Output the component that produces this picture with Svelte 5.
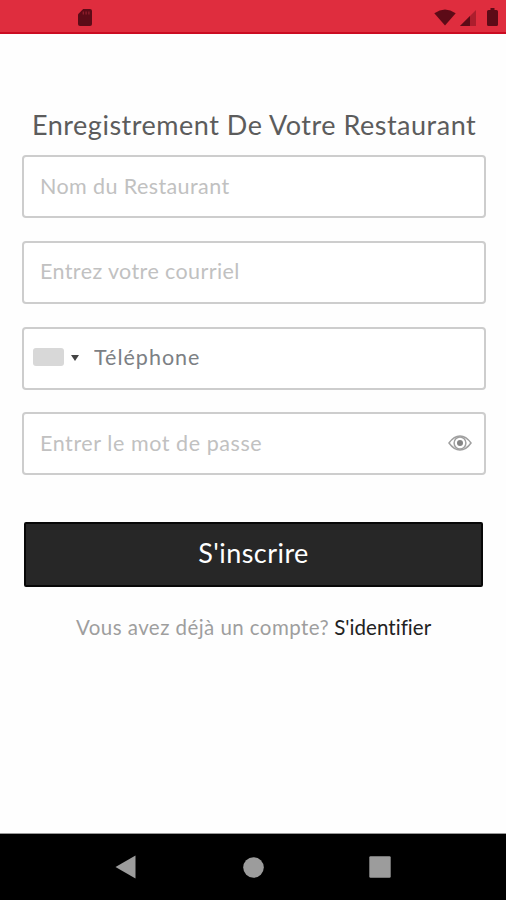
<script>
  let name = $state('');
  let email = $state('');
  let phone = $state('');
  let password = $state('');
  let visible = $state(false);
</script>

<div class="screen">
  <header class="status">
    <svg class="sd" width="16" height="20" viewBox="0 0 16 20" aria-hidden="true">
      <path d="M6.2 1H13a2 2 0 0 1 2 2v13a2 2 0 0 1-2 2H3a2 2 0 0 1-2-2V6.2z" fill="#5c0b17" />
      <path d="M6.3 3.5v3M9.1 3.5v3M11.9 3.5v3" stroke="#94202e" stroke-width="1.2" />
    </svg>
    <div class="signals">
      <svg class="wifi" width="22" height="17" viewBox="0 0 22 17" aria-hidden="true">
        <path d="M.3 4.200Q11-3.200 21.700 4.200L11 16.500z" fill="#5c0b17" />
      </svg>
      <svg class="cell" width="16" height="16" viewBox="0 0 16 16" aria-hidden="true">
        <path d="M16 0v16H0z" fill="#ad1e2d" />
        <path d="M10 6V16H0z" fill="#5c0b17" />
      </svg>
      <svg width="11" height="18" viewBox="0 0 11 18" aria-hidden="true">
        <path d="M3.500 0h4v2H9.500a1.500 1.500 0 0 1 1.500 1.500v13A1.500 1.500 0 0 1 9.500 18h-8A1.500 1.500 0 0 1 0 16.500v-13A1.500 1.500 0 0 1 1.500 2h2z" fill="#5c0b17" />
      </svg>
    </div>
  </header>

  <main>
    <h1>Enregistrement De Votre Restaurant</h1>
    <form onsubmit={(e) => e.preventDefault()}>
      <label class="field"><input class="name" placeholder="Nom du Restaurant" bind:value={name} /></label>
      <label class="field"><input class="email" placeholder="Entrez votre courriel" bind:value={email} /></label>
      <div class="field phone">
        <span class="flag"></span>
        <span class="caret"></span>
        <input class="tel" placeholder="Téléphone" bind:value={phone} />
      </div>
      <div class="field">
        <input class="pass" type={visible ? 'text' : 'password'} placeholder="Entrer le mot de passe" bind:value={password} />
        <button class="eye" type="button" aria-label="Afficher" onclick={() => (visible = !visible)}>
          <svg width="24" height="18" viewBox="0 0 24 18" fill="none" stroke="#a0a0a0" stroke-width="1.500">
            <path d="M1 9Q6 2 12 2T23 9Q18 16 12 16T1 9z" />
            <circle cx="12" cy="9" r="5.900" />
            <circle cx="12" cy="9" r="3" fill="#858585" stroke="none" />
          </svg>
        </button>
      </div>
      <button class="submit">S'inscrire</button>
    </form>
    <p class="login"><span class="ask">Vous avez déjà un compte?</span> <span class="link">S'identifier</span></p>
  </main>

  <nav>
    <svg width="21" height="24" viewBox="0 0 21 24" aria-hidden="true"><path d="M20.500.5v23L.5 12z" fill="#9c9c9c" /></svg>
    <svg class="home" width="21" height="21" viewBox="0 0 21 21" aria-hidden="true"><circle cx="10.500" cy="10.500" r="10.300" fill="#9c9c9c" /></svg>
    <svg width="22" height="22" viewBox="0 0 22 22" aria-hidden="true"><rect x=".3" y=".3" width="21.400" height="21.400" rx="1.200" fill="#9c9c9c" /></svg>
  </nav>
</div>

<style>
  :global(body) { background: #fff; }
  .screen {
    display: flex;
    flex-direction: column;
    width: 506px;
    height: 900px;
    overflow: hidden;
    background: #fefefe;
    font-family: Lato, "Liberation Sans", sans-serif;
  }
  .status {
    display: flex;
    justify-content: space-between;
    box-sizing: border-box;
    height: 34px;
    padding: 8px 8px 0 77px;
    background: #df2d3e;
    border-bottom: 2px solid #cb0c22;
  }
  .signals { display: flex; align-items: flex-start; }
  .wifi { margin-top: 1px; }
  .cell { margin: 2px 11px 0 4px; }
  main { flex: 1; padding: 72px 20px 0 22px; }
  h1 {
    margin: 0 0 11px;
    height: 38px;
    padding-left: 10px;
    font-size: 27px;
    line-height: 38px;
    font-weight: 400;
    letter-spacing: 0.51px;
    white-space: nowrap;
    color: #5c5c5c;
  }
  form { display: flex; flex-direction: column; gap: 22.800px; }
  .field {
    display: flex;
    align-items: center;
    box-sizing: border-box;
    height: 63px;
    padding: 0 12px 2px 16px;
    border: 2px solid #cdcdcd;
    border-radius: 4px;
    background: #fff;
  }
  input {
    flex: 1;
    min-width: 0;
    padding: 0;
    border: 0;
    outline: 0;
    background: none;
    font: 21.500px/30px Lato, "Liberation Sans", sans-serif;
    letter-spacing: 0.4px;
    color: #555;
  }
  input::placeholder { color: #c1c1c1; opacity: 1; }
  .tel { letter-spacing: 1px; }
  .tel::placeholder { color: #7c8084; }
  .pass { letter-spacing: 0.57px; }
  .phone { padding-left: 9px; }
  .flag { width: 31px; height: 18px; border-radius: 3px; background: #d8d8d8; }
  .caret {
    margin: 2px 15px 0 7px;
    border: 4px solid transparent;
    border-top: 6px solid #444;
    border-bottom: 0;
  }
  button { padding: 0; border: 0; background: none; }
  .eye { display: flex; }
  .submit {
    box-sizing: border-box;
    height: 65px;
    margin: 24px 3px 0 2px;
    padding-bottom: 4px;
    border: 2px solid #080808;
    border-radius: 2px;
    background: #272727;
    color: #fff;
    font: 27px/36px Lato, "Liberation Sans", sans-serif;
    letter-spacing: 0.45px;
  }
  .login {
    display: flex;
    gap: 5px;
    margin: 26px 0 0 54px;
    font-size: 20.500px;
    line-height: 28px;
    white-space: nowrap;
    color: #9e9e9e;
  }
  .ask { letter-spacing: 0.44px; }
  .link { color: #222; letter-spacing: 0.05px; }
  nav {
    display: flex;
    align-items: center;
    justify-content: space-between;
    box-sizing: border-box;
    height: 67px;
    padding: 0 115px;
    border-top: 1px solid #999;
    background: #000;
  }
  .home { margin-left: 2px; }
</style>
